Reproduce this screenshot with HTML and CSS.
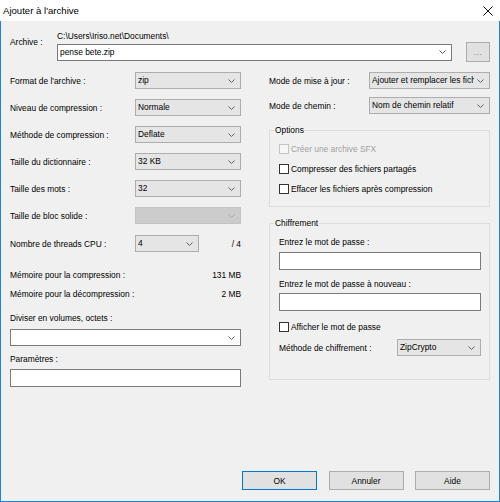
FILE: index.html
```html
<!DOCTYPE html>
<html lang="fr">
<head>
<meta charset="utf-8">
<title>Ajouter à l'archive</title>
<link rel="stylesheet" href="styles.css">
</head>
<body>
<div class="window">
  <div class="titlebar">
    <span class="title">Ajouter à l'archive</span>
    <svg class="close" width="10" height="10" viewBox="0 0 10 10"><path d="M0.5 0.5 L9.5 9.5 M9.5 0.5 L0.5 9.5" stroke="#111" stroke-width="1" fill="none"/></svg>
  </div>
  <div class="content">
    <div class="archive-row">
      <div class="archive-label">Archive :</div>
      <div class="archive-main">
        <div class="path">C:\Users\Iriso.net\Documents\</div>
        <div class="archive-inputs">
          <div class="combo edit archive-combo"><span class="ctext">pense bete.zip</span><svg class="chev" width="7" height="4" viewBox="0 0 7 4"><polyline points="0.5,0.5 3.5,3.5 6.5,0.5" fill="none" stroke="#606060" stroke-width="1"/></svg></div>
          <div class="btn browse">...</div>
        </div>
      </div>
    </div>

    <div class="columns">
      <div class="left">
        <div class="lrow"><span class="llabel">Format de l'archive :</span><div class="combo ro lcombo"><span class="ctext">zip</span><svg class="chev" width="7" height="4" viewBox="0 0 7 4"><polyline points="0.5,0.5 3.5,3.5 6.5,0.5" fill="none" stroke="#606060" stroke-width="1"/></svg></div></div>
        <div class="lrow"><span class="llabel">Niveau de compression :</span><div class="combo ro lcombo"><span class="ctext">Normale</span><svg class="chev" width="7" height="4" viewBox="0 0 7 4"><polyline points="0.5,0.5 3.5,3.5 6.5,0.5" fill="none" stroke="#606060" stroke-width="1"/></svg></div></div>
        <div class="lrow"><span class="llabel">Méthode de compression :</span><div class="combo ro lcombo"><span class="ctext">Deflate</span><svg class="chev" width="7" height="4" viewBox="0 0 7 4"><polyline points="0.5,0.5 3.5,3.5 6.5,0.5" fill="none" stroke="#606060" stroke-width="1"/></svg></div></div>
        <div class="lrow"><span class="llabel">Taille du dictionnaire :</span><div class="combo ro lcombo"><span class="ctext">32 KB</span><svg class="chev" width="7" height="4" viewBox="0 0 7 4"><polyline points="0.5,0.5 3.5,3.5 6.5,0.5" fill="none" stroke="#606060" stroke-width="1"/></svg></div></div>
        <div class="lrow"><span class="llabel">Taille des mots :</span><div class="combo ro lcombo"><span class="ctext">32</span><svg class="chev" width="7" height="4" viewBox="0 0 7 4"><polyline points="0.5,0.5 3.5,3.5 6.5,0.5" fill="none" stroke="#606060" stroke-width="1"/></svg></div></div>
        <div class="lrow"><span class="llabel">Taille de bloc solide :</span><div class="combo disabled lcombo"><span class="ctext"></span><svg class="chev" width="7" height="4" viewBox="0 0 7 4"><polyline points="0.5,0.5 3.5,3.5 6.5,0.5" fill="none" stroke="#a8a8a8" stroke-width="1"/></svg></div></div>
        <div class="lrow threads"><span class="llabel">Nombre de threads CPU :</span><div class="combo ro tcombo"><span class="ctext">4</span><svg class="chev" width="7" height="4" viewBox="0 0 7 4"><polyline points="0.5,0.5 3.5,3.5 6.5,0.5" fill="none" stroke="#606060" stroke-width="1"/></svg></div><span class="tmax">/ 4</span></div>

        <div class="mem">
          <div class="memline"><span>Mémoire pour la compression :</span><span>131 MB</span></div>
          <div class="memline"><span>Mémoire pour la décompression :</span><span>2 MB</span></div>
        </div>

        <div class="flabel split-label">Diviser en volumes, octets :</div>
        <div class="combo edit split-combo"><span class="ctext"></span><svg class="chev" width="7" height="4" viewBox="0 0 7 4"><polyline points="0.5,0.5 3.5,3.5 6.5,0.5" fill="none" stroke="#606060" stroke-width="1"/></svg></div>
        <div class="flabel param-label">Paramètres :</div>
        <div class="input param-input"></div>
      </div>

      <div class="right">
        <div class="rrow first"><span class="rlabel">Mode de mise à jour :</span><div class="combo ro rcombo"><span class="ctext">Ajouter et remplacer les fichiers</span><svg class="chev" width="7" height="4" viewBox="0 0 7 4"><polyline points="0.5,0.5 3.5,3.5 6.5,0.5" fill="none" stroke="#606060" stroke-width="1"/></svg></div></div>
        <div class="rrow second"><span class="rlabel">Mode de chemin :</span><div class="combo ro rcombo"><span class="ctext">Nom de chemin relatif</span><svg class="chev" width="7" height="4" viewBox="0 0 7 4"><polyline points="0.5,0.5 3.5,3.5 6.5,0.5" fill="none" stroke="#606060" stroke-width="1"/></svg></div></div>

        <fieldset class="group options">
          <legend>Options</legend>
          <div class="check disabled"><span class="box"></span><span>Créer une archive SFX</span></div>
          <div class="check"><span class="box"></span><span>Compresser des fichiers partagés</span></div>
          <div class="check"><span class="box"></span><span>Effacer les fichiers après compression</span></div>
        </fieldset>

        <fieldset class="group crypto">
          <legend>Chiffrement</legend>
          <div class="flabel pw1-label">Entrez le mot de passe :</div>
          <div class="input pw1"></div>
          <div class="flabel pw2-label">Entrez le mot de passe à nouveau :</div>
          <div class="input pw2"></div>
          <div class="check show-pw"><span class="box"></span><span>Afficher le mot de passe</span></div>
          <div class="method-row"><span class="mlabel">Méthode de chiffrement :</span><div class="combo ro mcombo"><span class="ctext">ZipCrypto</span><svg class="chev" width="7" height="4" viewBox="0 0 7 4"><polyline points="0.5,0.5 3.5,3.5 6.5,0.5" fill="none" stroke="#606060" stroke-width="1"/></svg></div></div>
        </fieldset>
      </div>
    </div>

    <div class="buttons">
      <div class="btn dlg default">OK</div>
      <div class="btn dlg">Annuler</div>
      <div class="btn dlg">Aide</div>
    </div>
  </div>
</div>
</body>
</html>
```

FILE: styles.css
```css
* { box-sizing: border-box; }
html, body { margin: 0; padding: 0; }
body {
  font-family: "Liberation Sans", Arial, sans-serif;
  font-size: 8.4px;
  color: #000;
  background: #f0f0f0;
}
.window {
  width: 500px;
  height: 502px;
  display: flex;
  flex-direction: column;
  background: #f0f0f0;
}
.titlebar {
  height: 21px;
  flex: none;
  background: #fff;
  display: flex;
  align-items: center;
  justify-content: space-between;
  padding: 0 7px 0 3px;
}
.title { font-size: 9.6px; line-height: 12px; margin-top: 0; }
.close { display: block; margin-top: 0; }
.content {
  flex: 1;
  border: 1px solid #1a84d8;
  border-top: none;
  padding: 10px 9px 11px 9px;
  display: flex;
  flex-direction: column;
}

/* archive */
.archive-row { display: flex; }
.archive-label { width: 47px; line-height: 11px; margin-top: 6px; }
.archive-main { flex: 1; }
.path { line-height: 11px; height: 11px; }
.archive-inputs { display: flex; align-items: center; height: 20px; gap: 14px; }
.archive-combo { flex: 1; height: 18px; }
.browse { width: 24px; height: 20px; color: #8a7a90; letter-spacing: 0.5px; }

/* combos */
.combo {
  display: flex;
  align-items: center;
  height: 17px;
  border: 1px solid #adadad;
  background: #e5e5e5;
  padding: 0 5px 0 2px;
  overflow: hidden;
}
.combo.edit { background: #fff; border-color: #7a7a7a; }
.combo.disabled { background: #cccccc; border-color: #c4c4c4; }
.ctext { flex: 1; white-space: nowrap; overflow: hidden; line-height: 11px; }
.chev { flex: none; display: block; margin-left: 3px; }
.input { background: #fff; border: 1px solid #7a7a7a; height: 18px; }

/* buttons */
.btn {
  display: flex;
  align-items: center;
  justify-content: center;
  background: #e1e1e1;
  border: 1px solid #adadad;
}
.buttons {
  margin-top: auto;
  display: flex;
  justify-content: flex-end;
  gap: 11.5px;
}
.dlg { width: 75px; height: 19px; }
.dlg.default { border-color: #0078d7; }

/* columns */
.columns { display: flex; gap: 28px; margin-top: 10px; align-items: flex-start; }
.left { width: 231px; display: flex; flex-direction: column; }
.right { width: 221px; display: flex; flex-direction: column; }

.lrow { display: flex; align-items: center; height: 17px; }
.lrow + .lrow { margin-top: 10px; }
.lrow.threads { margin-top: 11px; }
.llabel { width: 125px; flex: none; white-space: nowrap; }
.lcombo { flex: 1; }
.tcombo { width: 64px; flex: none; }
.tmax { margin-left: auto; }

.mem { margin-top: 13px; }
.memline { display: flex; justify-content: space-between; height: 19px; align-items: center; }

.flabel { line-height: 11px; height: 11px; white-space: nowrap; }
.split-label { margin-top: 10px; }
.split-combo { margin-top: 5px; }
.param-label { margin-top: 8px; }
.param-input { margin-top: 4px; }

.rrow { display: flex; align-items: center; height: 17px; }
.rrow.second { margin-top: 8px; }
.rlabel { width: 100px; flex: none; white-space: nowrap; }
.rcombo { flex: 1; padding-right: 5px; }

.group {
  margin: 0;
  border: 1px solid #dcdcdc;
  min-width: 0;
}
.group legend {
  padding: 0 1px;
  margin-left: -5px;
  line-height: 11px;
  font-size: 8.4px;
}
.options { margin-top: 11px; padding: 3px 8px 7px 9px; }
.crypto { margin-top: 11px; padding: 8px 8px 23px 9px; }

.check { display: flex; align-items: center; height: 20px; white-space: nowrap; }
.check .box {
  width: 10px; height: 10px;
  border: 1px solid #333;
  background: #fff;
  margin-right: 2px;
  flex: none;
}
.check.disabled { color: #a0a0a0; }
.check.disabled .box { border-color: #c4c4c4; background: #f6f6f6; }

.pw1 { margin-top: 4px; }
.pw2-label { margin-top: 9px; }
.pw2 { margin-top: 3px; }
.show-pw { margin-top: 6px; }
.method-row { display: flex; align-items: center; height: 17px; margin-top: 2px; }
.mlabel { width: 118px; flex: none; white-space: nowrap; }
.mcombo { flex: 1; }
```
